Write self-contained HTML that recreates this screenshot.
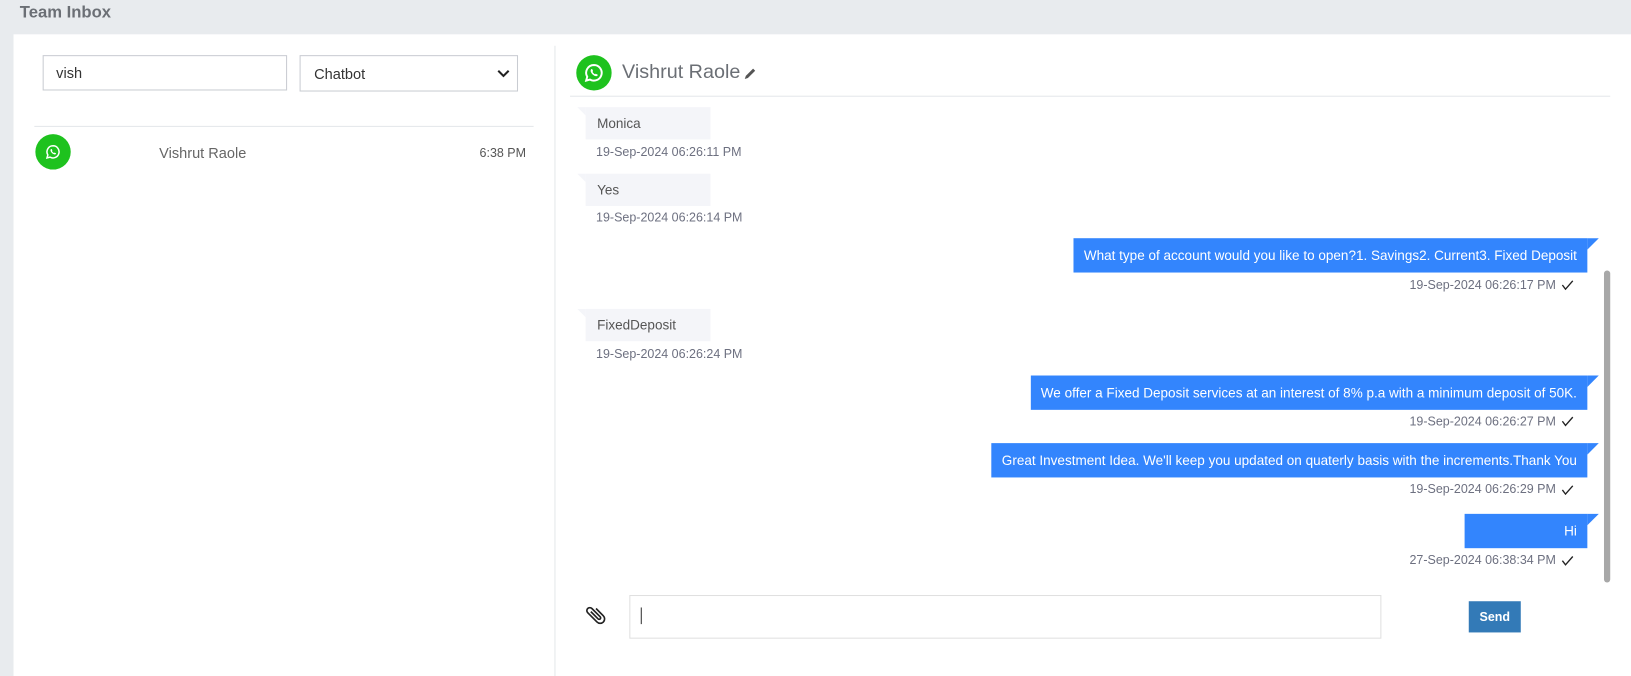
<!DOCTYPE html>
<html><head><style>
*{margin:0;padding:0;box-sizing:border-box}
body{width:1631px;height:676px;background:#e8ebee;font-family:"Liberation Sans",Arial,sans-serif;position:relative;overflow:hidden}
#w{position:absolute;left:0;top:0;width:1568px;height:650px;transform:scale(1.0402);transform-origin:0 0}
.a{position:absolute}
.title{left:19px;top:4px;font-size:16px;font-weight:bold;color:#6b6f75}
.panel{left:13px;top:33px;width:1555px;height:617px;background:#fff}
.in{border:1px solid #c9ccd2;background:#fff;font-size:14px;color:#333}
.wa{border-radius:50%;background:#1ec21e;display:flex;align-items:center;justify-content:center}
.inb{background:#f4f5f9;font-size:13px;color:#555;padding-left:11px;line-height:31px;height:31px;width:120px}
.inb:before{content:"";position:absolute;left:-8px;top:0;border-top:8px solid #f4f5f9;border-left:8px solid transparent}
.ts{font-size:12px;color:#6d7080}
.out{background:#3385fd;color:#fff;font-size:13px;height:33px;line-height:33px;padding:0 10px;text-align:right}
.out:after{content:"";position:absolute;right:-11px;top:0;border-top:11px solid #3385fd;border-right:11px solid transparent}
.ck{width:12px;height:10px}
</style></head><body><div id="w">
<div class="a title">Team Inbox</div>
<div class="a panel"></div>
<div class="a in" style="left:41px;top:53px;width:235px;height:34px;padding:8px 12px">vish</div>
<div class="a in" style="left:288px;top:53px;width:210px;height:35px;padding:9px 13px">Chatbot
<svg class="a" style="right:7px;top:13px" width="12" height="9" viewBox="0 0 12 9"><path d="M1 1l5 5 5-5" fill="none" stroke="#222" stroke-width="2"/></svg></div>
<div class="a" style="left:33px;top:121px;width:480px;height:1px;background:#e4e7ea"></div>
<div class="a wa" style="left:34px;top:129px;width:34px;height:34px"><svg width="14" height="14" viewBox="0 0 24 24"><path d="M12 2a10 10 0 0 0-8.6 15.1L2 22l5-1.3A10 10 0 1 0 12 2z" fill="none" stroke="#fff" stroke-width="2.5"/><path d="M8.5 7.5c.5-.5 1.2-.4 1.5.2l.8 1.8c.1.4-.3.8-.6 1.1.7 1.5 1.8 2.6 3.3 3.3.3-.3.7-.8 1.1-.6l1.8.8c.6.3.6 1 .2 1.5-1 1-2.5 1-4.5-.2-2-1.2-3.4-2.9-4.1-4.6-.5-1.4-.3-2.6.5-3.3z" fill="#fff"/></svg></div>
<div class="a" style="left:153px;top:139px;font-size:14px;color:#666">Vishrut Raole</div>
<div class="a" style="left:461px;top:140px;font-size:12px;color:#555">6:38 PM</div>
<div class="a" style="left:533px;top:44px;width:1px;height:606px;background:#e4e7ea"></div>
<div class="a wa" style="left:554px;top:53px;width:34px;height:34px"><svg width="18" height="18" viewBox="0 0 24 24"><path d="M12 2a10 10 0 0 0-8.6 15.1L2 22l5-1.3A10 10 0 1 0 12 2z" fill="none" stroke="#fff" stroke-width="2.5"/><path d="M8.5 7.5c.5-.5 1.2-.4 1.5.2l.8 1.8c.1.4-.3.8-.6 1.1.7 1.5 1.8 2.6 3.3 3.3.3-.3.7-.8 1.1-.6l1.8.8c.6.3.6 1 .2 1.5-1 1-2.5 1-4.5-.2-2-1.2-3.4-2.9-4.1-4.6-.5-1.4-.3-2.6.5-3.3z" fill="#fff"/></svg></div>
<div class="a" style="left:598px;top:59px;font-size:19px;color:#6b6f75">Vishrut Raole</div>
<svg class="a" style="left:714px;top:64px" width="14" height="14" viewBox="0 0 14 14"><path d="M2 12l1-3 7-7 2 2-7 7z" fill="#555"/></svg>
<div class="a" style="left:548px;top:92px;width:1000px;height:1px;background:#e4e7ea"></div>
<div class="a inb" style="left:563px;top:103px">Monica</div>
<div class="a ts" style="left:573px;top:139px">19-Sep-2024 06:26:11 PM</div>
<div class="a inb" style="left:563px;top:167px">Yes</div>
<div class="a ts" style="left:573px;top:202px">19-Sep-2024 06:26:14 PM</div>
<div class="a out" style="right:42px;top:229px">What type of account would you like to open?1. Savings2. Current3. Fixed Deposit</div>
<div class="a ts" style="left:1355px;top:267px">19-Sep-2024 06:26:17 PM</div><svg class="a ck" style="left:1501px;top:269px" viewBox="0 0 12 10"><path d="M1 5l3 4 7-8" fill="none" stroke="#222" stroke-width="1.3"/></svg>
<div class="a inb" style="left:563px;top:297px">FixedDeposit</div>
<div class="a ts" style="left:573px;top:333px">19-Sep-2024 06:26:24 PM</div>
<div class="a out" style="right:42px;top:361px">We offer a Fixed Deposit services at an interest of 8% p.a with a minimum deposit of 50K.</div>
<div class="a ts" style="left:1355px;top:398px">19-Sep-2024 06:26:27 PM</div><svg class="a ck" style="left:1501px;top:400px" viewBox="0 0 12 10"><path d="M1 5l3 4 7-8" fill="none" stroke="#222" stroke-width="1.3"/></svg>
<div class="a out" style="right:42px;top:426px">Great Investment Idea. We'll keep you updated on quaterly basis with the increments.Thank You</div>
<div class="a ts" style="left:1355px;top:463px">19-Sep-2024 06:26:29 PM</div><svg class="a ck" style="left:1501px;top:466px" viewBox="0 0 12 10"><path d="M1 5l3 4 7-8" fill="none" stroke="#222" stroke-width="1.3"/></svg>
<div class="a out" style="right:42px;top:494px;width:118px">Hi</div>
<div class="a ts" style="left:1355px;top:531px">27-Sep-2024 06:38:34 PM</div><svg class="a ck" style="left:1501px;top:534px" viewBox="0 0 12 10"><path d="M1 5l3 4 7-8" fill="none" stroke="#222" stroke-width="1.3"/></svg>
<div class="a" style="left:1542px;top:260px;width:6px;height:300px;background:#a8a8a8;border-radius:3px"></div>
<svg class="a" style="left:560px;top:580px" width="24" height="24" viewBox="0 0 24 24"><path d="M19 13l-7 7a4 4 0 0 1-6-6l9-9a2.5 2.5 0 0 1 4 4l-8 8a1 1 0 0 1-2-2l7-7" fill="none" stroke="#222" stroke-width="1.6" transform="rotate(-90 12 12)"/></svg>
<div class="a" style="left:605px;top:572px;width:723px;height:42px;border:1px solid #e0e0e0"></div>
<div class="a" style="left:616px;top:584px;width:1px;height:16px;background:#333"></div>
<div class="a" style="left:1412px;top:578px;width:50px;height:30px;background:#337ab7;color:#fff;font-size:12px;font-weight:bold;text-align:center;line-height:30px">Send</div>
</div></body></html>
